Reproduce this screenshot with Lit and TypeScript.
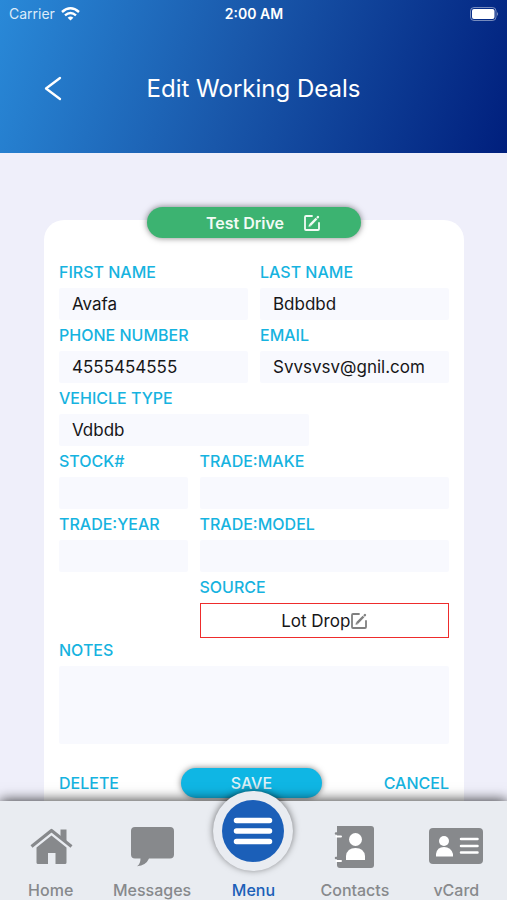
import { LitElement, html, css, svg } from "lit";
import { customElement, property } from "lit/decorators.js";

const editIcon = svg`
  <path d="M9 2H3Q2 2 2 3V15Q2 16 3 16H15Q16 16 16 15V9" fill="none" stroke="currentColor" stroke-width="1.8" stroke-linecap="round"/>
  <path d="M7 11.200 13.500 4.500" stroke="currentColor" stroke-width="2.500"/>
  <path d="M5.500 12.700 6 10.200 8 12.200ZM13.200 3.200 14.400 2Q15 1.600 15.500 2L16 2.600Q16.400 3.200 15.900 3.700L14.800 4.800Z" fill="currentColor"/>`;

@customElement("deal-field")
class DealField extends LitElement {
  @property() label = "";
  @property() value = "";
  @property({ type: Boolean }) multiline = false;

  static styles = css`
    :host { display: block; min-width: 0; }
    .label {
      display: block;
      margin-bottom: 6px;
      font-size: 16px;
      font-weight: 500;
      line-height: 20px;
      color: #16b3e0;
      white-space: nowrap;
    }
    .control {
      display: block;
      box-sizing: border-box;
      width: 100%;
      height: 32px;
      margin: 0;
      padding: 0 13px;
      border: 0;
      border-radius: 2px;
      background: #f8f9fe;
      color: #161618;
      font: 400 17px/32px Inter, sans-serif;
      resize: none;
    }
    .area { height: 78px; }
  `;

  render() {
    return html`
      <label class="label" for="control">${this.label}</label>
      ${this.multiline
        ? html`<textarea id="control" class="control area" .value=${this.value}></textarea>`
        : html`<input id="control" class="control" type="text" .value=${this.value} />`}
    `;
  }
}

const tabs = [
  {
    name: "Home",
    icon: svg`
      <path d="M2.500 20.500 22.500 4.500 42.500 20.500" fill="none" stroke="currentColor" stroke-width="3.200" stroke-linejoin="round"/>
      <path d="M31.500 3.500H37.500V17L31.500 12.300Z" fill="currentColor"/>
      <path d="M22.500 9.500 37.500 21.500V36.500Q37.500 38 36 38H26.500V27H19V38H9Q7.500 38 7.500 36.500V21.500Z" fill="currentColor"/>`,
  },
  {
    name: "Messages",
    icon: svg`<path d="M5 1H40Q44 1 44 5V28.500Q44 32.500 40 32.500H19Q16 39.500 7 40.300Q10.500 38 10.500 32.500H5Q1 32.500 1 28.500V5Q1 1 5 1Z" fill="currentColor"/>`,
  },
  { name: "Menu", icon: null },
  {
    name: "Contacts",
    icon: svg`
      <path d="M7 0H38Q41 0 41 3V39Q41 42 38 42H7Q4 42 4 39V0Z" fill="currentColor"/>
      <path d="M3 7.500H7M3 32H7" stroke="currentColor" stroke-width="2.500" stroke-linecap="round"/>
      <path d="M3.500 10.500H8M3.500 35H8" stroke="#fff" stroke-width="2" stroke-linecap="round"/>
      <circle cx="22.500" cy="13.500" r="6.500" fill="#fff"/>
      <path d="M13 34V30Q14 22 22.500 22T32 30V34Z" fill="#fff"/>`,
  },
  {
    name: "vCard",
    wide: true,
    icon: svg`
      <rect x="0" y="2" width="54" height="36" rx="4" fill="currentColor"/>
      <circle cx="15" cy="15" r="5" fill="#fff"/>
      <path d="M7 30.500V28Q8 21 15 21T24 28V30.500Z" fill="#fff"/>
      <path d="M32 13H48.500M32 20H48.500M32 26.500H48.500" stroke="#fff" stroke-width="2.500" stroke-linecap="round"/>`,
  },
];

@customElement("app-root")
class AppRoot extends LitElement {
  static styles = css`
    :host {
      display: flex;
      flex-direction: column;
      height: 100vh;
      overflow: hidden;
      background: #efeffa;
      font-family: Inter, sans-serif;
    }
    button { margin: 0; padding: 0; border: 0; background: none; font: inherit; color: inherit; cursor: pointer; }
    svg { display: block; flex: none; }

    .header {
      flex: none;
      background: linear-gradient(108deg, #2989d8 0%, #1957aa 47%, #001f7d 100%);
      color: #fff;
    }
    .status {
      display: grid;
      grid-template-columns: 1fr auto 1fr;
      align-items: center;
      height: 28px;
      padding: 0 8px 0 9px;
      font-size: 14px;
      line-height: 20px;
    }
    .carrier { display: flex; align-items: center; gap: 6px; color: #dcebf9; }
    .time { font-weight: 600; }
    .battery { justify-self: end; }
    .title-bar {
      display: grid;
      grid-template-columns: 1fr auto 1fr;
      align-items: center;
      padding: 41px 43px 44px;
    }
    .back { width: 20px; height: 30px; display: flex; align-items: center; }
    .title { margin: 0; font-size: 24px; font-weight: 400; line-height: 40px; }

    .content {
      flex: 1;
      min-height: 0;
      overflow: hidden auto;
      scrollbar-width: none;
      padding: 54px 43px 0 44px;
    }
    .card {
      margin-top: 13px;
      padding: 0 15px 40px;
      border-radius: 20px;
      background: #fff;
    }
    .stage-row { display: flex; justify-content: center; height: 42px; }
    .stage {
      display: flex;
      align-items: center;
      justify-content: center;
      gap: 20px;
      box-sizing: border-box;
      width: 55%;
      height: 31px;
      margin-top: -13px;
      padding-left: 18px;
      border-radius: 16px;
      background: #3cb371;
      color: #f2fbf5;
      font-size: 16px;
      font-weight: 600;
      box-shadow: 0 0 6px rgba(0, 0, 0, 0.5);
    }
    .row { display: grid; gap: 12px; margin-bottom: 5px; }
    .halves { grid-template-columns: 1fr 1fr; }
    .thirds { grid-template-columns: 34fr 66fr; }
    .single { grid-template-columns: 64%; }
    .source-row { margin-bottom: 2px; }
    .source { grid-column: 2; }
    .source-label { font-size: 16px; font-weight: 500; line-height: 20px; color: #16b3e0; margin-bottom: 6px; }
    .source-button {
      display: flex;
      align-items: center;
      justify-content: center;
      gap: 1px;
      box-sizing: border-box;
      width: 100%;
      height: 35px;
      border: 1px solid #ee2c2c;
      background: #fff;
      color: #161618;
      font-size: 17px;
    }
    .source-icon { color: #808080; }
    .actions {
      display: flex;
      justify-content: space-between;
      align-items: center;
      margin-top: 24px;
      color: #16b3e0;
      font-size: 16px;
      font-weight: 500;
    }
    .save {
      width: 141px;
      height: 30px;
      border-radius: 15px;
      background: #0fb6e4;
      color: #e0f2f8;
      box-shadow: 0 0 6px rgba(0, 0, 0, 0.5);
    }

    .tabs {
      position: relative;
      z-index: 1;
      flex: none;
      display: grid;
      grid-template-columns: repeat(5, 1fr);
      height: 99px;
      background: #e9ecf1;
      box-shadow: 0 -1px 12px rgba(0, 0, 0, 0.75);
    }
    .tab {
      position: relative;
      display: flex;
      flex-direction: column;
      align-items: center;
      justify-content: flex-end;
      gap: 13px;
      padding-bottom: 1px;
      color: #87898c;
      font-size: 16px;
      font-weight: 500;
      line-height: 18px;
    }
    .tab.active { color: #1b5fb8; }
    .bubble {
      position: absolute;
      top: -10px;
      left: 50%;
      transform: translateX(-50%);
      display: flex;
      align-items: center;
      justify-content: center;
      width: 80px;
      height: 80px;
      border-radius: 50%;
      background: #e9ecf1;
      box-shadow: 0 -1px 7px rgba(0, 0, 0, 0.5);
    }
  `;

  render() {
    return html`
      <header class="header">
        <div class="status">
          <span class="carrier">
            Carrier
            <svg width="19" height="14" viewBox="0 0 19 14" fill="none" stroke="#fff" stroke-width="2.4">
              <path d="M1 5Q9.500 -2.500 18 5" />
              <path d="M4 8.300Q9.500 3.500 15 8.300" />
              <path d="M9.500 13.500 6.600 10.700Q9.500 8.500 12.400 10.700Z" fill="#fff" stroke="none" />
            </svg>
          </span>
          <span class="time">2:00 AM</span>
          <svg class="battery" width="29" height="14" viewBox="0 0 29 14">
            <rect x=".5" y=".5" width="25.500" height="13" rx="3.500" fill="none" stroke="#fff" stroke-opacity=".45" />
            <rect x="2" y="2" width="22.500" height="10" rx="2" fill="#fff" />
            <path d="M27 5Q29 7 27 9Z" fill="#fff" fill-opacity=".5" />
          </svg>
        </div>
        <div class="title-bar">
          <button class="back" aria-label="Back">
            <svg width="20" height="26" viewBox="0 0 20 26" fill="none" stroke="#fff" stroke-width="2.300" stroke-linecap="round" stroke-linejoin="round">
              <path d="M17 2 3 12.500 17 23" />
            </svg>
          </button>
          <h1 class="title">Edit Working Deals</h1>
        </div>
      </header>

      <main class="content">
        <form class="card" @submit=${(e: Event) => e.preventDefault()}>
          <div class="stage-row">
            <button class="stage" type="button">
              Test Drive
              <svg width="16" height="16" viewBox="1 1 16 16">${editIcon}</svg>
            </button>
          </div>
          <div class="row halves">
            <deal-field label="FIRST NAME" value="Avafa"></deal-field>
            <deal-field label="LAST NAME" value="Bdbdbd"></deal-field>
          </div>
          <div class="row halves">
            <deal-field label="PHONE NUMBER" value="4555454555"></deal-field>
            <deal-field label="EMAIL" value="Svvsvsv@gnil.com"></deal-field>
          </div>
          <div class="row single">
            <deal-field label="VEHICLE TYPE" value="Vdbdb"></deal-field>
          </div>
          <div class="row thirds">
            <deal-field label="STOCK#"></deal-field>
            <deal-field label="TRADE:MAKE"></deal-field>
          </div>
          <div class="row thirds">
            <deal-field label="TRADE:YEAR"></deal-field>
            <deal-field label="TRADE:MODEL"></deal-field>
          </div>
          <div class="row thirds source-row">
            <div class="source">
              <div class="source-label" id="source-label">SOURCE</div>
              <button class="source-button" type="button" aria-describedby="source-label">
                Lot Drop
                <svg class="source-icon" width="16" height="16" viewBox="1 1 16 16">${editIcon}</svg>
              </button>
            </div>
          </div>
          <deal-field label="NOTES" multiline></deal-field>
          <div class="actions">
            <button type="button">DELETE</button>
            <button class="save" type="submit">SAVE</button>
            <button type="button">CANCEL</button>
          </div>
        </form>
      </main>

      <nav class="tabs">
        ${tabs.map((tab) => html`
          <button class="tab ${tab.icon ? "" : "active"}">
            ${tab.icon
              ? html`<svg width=${tab.wide ? 54 : 44} height="42" viewBox="0 0 ${tab.wide ? 54 : 44} 42">${tab.icon}</svg>`
              : html`<span class="bubble">
                  <svg width="62" height="62" viewBox="0 0 62 62">
                    <circle cx="31" cy="31" r="31" fill="#1b5fb8" />
                    <path d="M14.500 20.500H47.500M14.500 31H47.500M14.500 41.500H47.500" stroke="#fff" stroke-width="5.500" stroke-linecap="round" />
                  </svg>
                </span>`}
            <span>${tab.name}</span>
          </button>
        `)}
      </nav>
    `;
  }
}
